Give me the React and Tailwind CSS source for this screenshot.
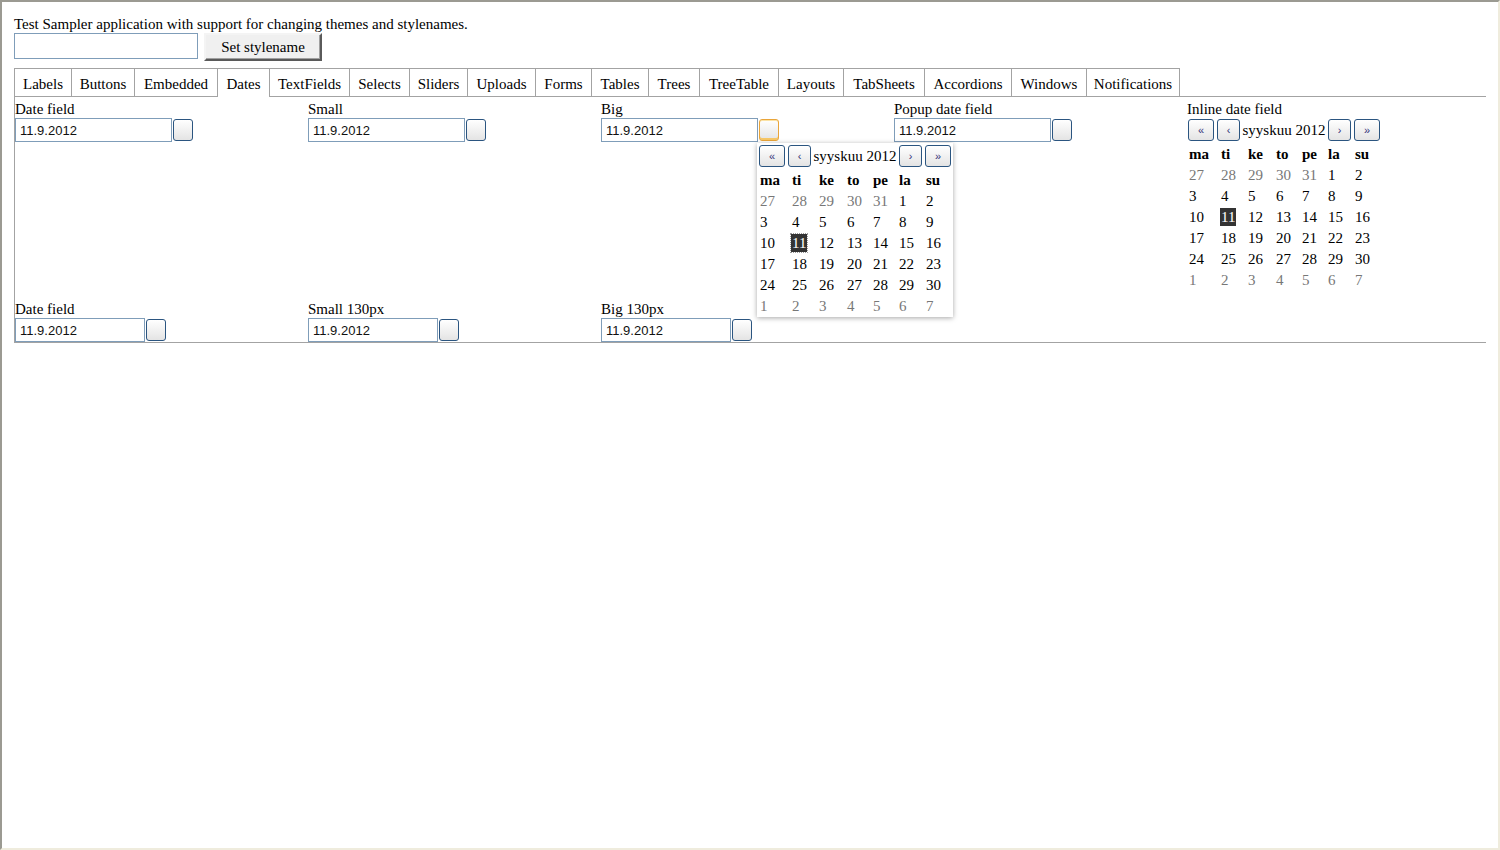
import React from 'react';

const TABS = [
  ['Labels', 'w-[57px]'],
  ['Buttons', 'w-[63px]'],
  ['Embedded', 'w-[83px]'],
  ['Dates', 'w-[52px]'],
  ['TextFields', 'w-[80px]'],
  ['Selects', 'w-[60px]'],
  ['Sliders', 'w-[58px]'],
  ['Uploads', 'w-[68px]'],
  ['Forms', 'w-[56px]'],
  ['Tables', 'w-[57px]'],
  ['Trees', 'w-[51px]'],
  ['TreeTable', 'w-[79px]'],
  ['Layouts', 'w-[65px]'],
  ['TabSheets', 'w-[81px]'],
  ['Accordions', 'w-[87px]'],
  ['Windows', 'w-[75px]'],
  ['Notifications', 'w-[94px]'],
];

const DAYS = ['ma', 'ti', 'ke', 'to', 'pe', 'la', 'su'];

// [day, otherMonth]
const WEEKS = [
  [[27, true], [28, true], [29, true], [30, true], [31, true], [1], [2]],
  [[3], [4], [5], [6], [7], [8], [9]],
  [[10], [11], [12], [13], [14], [15], [16]],
  [[17], [18], [19], [20], [21], [22], [23]],
  [[24], [25], [26], [27], [28], [29], [30]],
  [[1, true], [2, true], [3, true], [4, true], [5, true], [6, true], [7, true]],
];

const COLS = 'grid grid-cols-[32px_27px_28px_26px_26px_27px_26px]';

const NavButton = ({ children, wide }) => (
  <button className={`${wide ? 'w-[26px]' : 'w-[23px]'} h-[22px] shrink-0 rounded-[3px] border border-[#2b5580] bg-gradient-to-b from-white to-[#e4e4e4] text-[11px] leading-none text-[#33337a] font-['Liberation_Sans',sans-serif]`}>
    {children}
  </button>
);

const Calendar = ({ popup }) => (
  <div>
    <div className="flex items-center w-[192px]">
      <NavButton wide>«</NavButton>
      <div className="w-[3px]" />
      <NavButton>‹</NavButton>
      <span className="flex-1 text-center whitespace-nowrap">syyskuu 2012</span>
      <NavButton>›</NavButton>
      <div className="w-[3px]" />
      <NavButton wide>»</NavButton>
    </div>
    <div className="pl-px mt-[2px]">
      <div className={`${COLS} leading-[21px] font-bold`}>
        {DAYS.map((d) => <span key={d}>{d}</span>)}
      </div>
      {WEEKS.map((w, i) => (
        <div key={i} className={`${COLS} leading-[21px]`}>
          {w.map(([d, other], j) => (
            <span key={j} className={other ? 'text-[#777]' : ''}>
              {i === 2 && d === 11 ? (
                <span className={`inline-block -ml-px px-px bg-[#333] text-white leading-[18px] ${popup ? 'outline outline-1 outline-dotted outline-[#999]' : ''}`}>{d}</span>
              ) : d}
            </span>
          ))}
        </div>
      ))}
    </div>
  </div>
);

const DateField = ({ label, narrow, hover }) => (
  <div className="pt-[3px]">
    <div className="leading-[18px] whitespace-nowrap">{label}</div>
    <div className="flex items-center">
      <input
        readOnly
        value="11.9.2012"
        className={`${narrow ? 'w-[130px]' : 'w-[157px]'} h-[24px] border border-[#7f9db9] pl-[4px] text-[13px] text-[#111] font-['Liberation_Sans',sans-serif] outline-none`}
      />
      <button
        className={`ml-px w-[20px] h-[22px] rounded-[3px] border bg-gradient-to-b from-white to-[#e4e4e4] ${hover ? 'border-[#e9a53a] shadow-[inset_0_-2px_0_#f7c766,inset_0_1px_0_#fbe3a6]' : 'border-[#2b5580]'}`}
      />
    </div>
  </div>
);

export default function App() {
  return (
    <div className="w-[1500px] h-[850px] box-border border-2 border-t-[#9b9a92] border-l-[#9b9a92] border-r-[#efecdd] border-b-[#efecdd] bg-white text-black text-[15px] font-['Liberation_Serif',serif] overflow-hidden">
      <div className="px-[12px] pt-[13px]">
        <div className="leading-[18px]">Test Sampler application with support for changing themes and stylenames.</div>
        <div className="flex items-start">
          <input className="w-[184px] h-[26px] border border-[#7f9db9] outline-none" />
          <button className="ml-[6px] w-[118px] h-[28px] pt-px border-2 border-t-[#f4f4f4] border-l-[#f4f4f4] border-r-[#5a5a5a] border-b-[#5a5a5a] bg-[#f0f0f0] shadow-[inset_-1px_-1px_0_#a0a0a0]">
            Set stylename
          </button>
        </div>

        <div className="mt-[7px] flex items-start border-b border-[#a3a3a3]">
          {TABS.map(([t, w], i) => (
            <div
              key={t}
              className={`${w} shrink-0 text-center pt-[6px] leading-[18px] border-t border-l border-[#a3a3a3] whitespace-nowrap ${i === TABS.length - 1 ? 'border-r' : ''} ${t === 'Dates' ? 'h-[29px] -mb-px bg-white relative z-10' : 'h-[28px]'}`}
            >
              {t}
            </div>
          ))}
        </div>

        <div className="grid grid-cols-[293px_293px_293px_293px_1fr] grid-rows-[200px_auto] border-l border-b border-[#a3a3a3]">
          <DateField label="Date field" />
          <DateField label="Small" />
          <div className="relative">
            <DateField label="Big" hover />
            <div className="absolute left-[156px] top-[46px] z-20 w-[196px] bg-white p-[2px] pb-0 shadow-[0_1px_5px_rgba(0,0,0,0.35)]">
              <Calendar popup />
            </div>
          </div>
          <DateField label="Popup date field" />
          <div className="pt-[3px]">
            <div className="leading-[18px]">Inline date field</div>
            <div className="pl-px mt-px">
              <Calendar />
            </div>
          </div>

          <DateField label="Date field" narrow />
          <DateField label="Small 130px" narrow />
          <DateField label="Big 130px" narrow />
          <div />
          <div />
        </div>
      </div>
    </div>
  );
}
